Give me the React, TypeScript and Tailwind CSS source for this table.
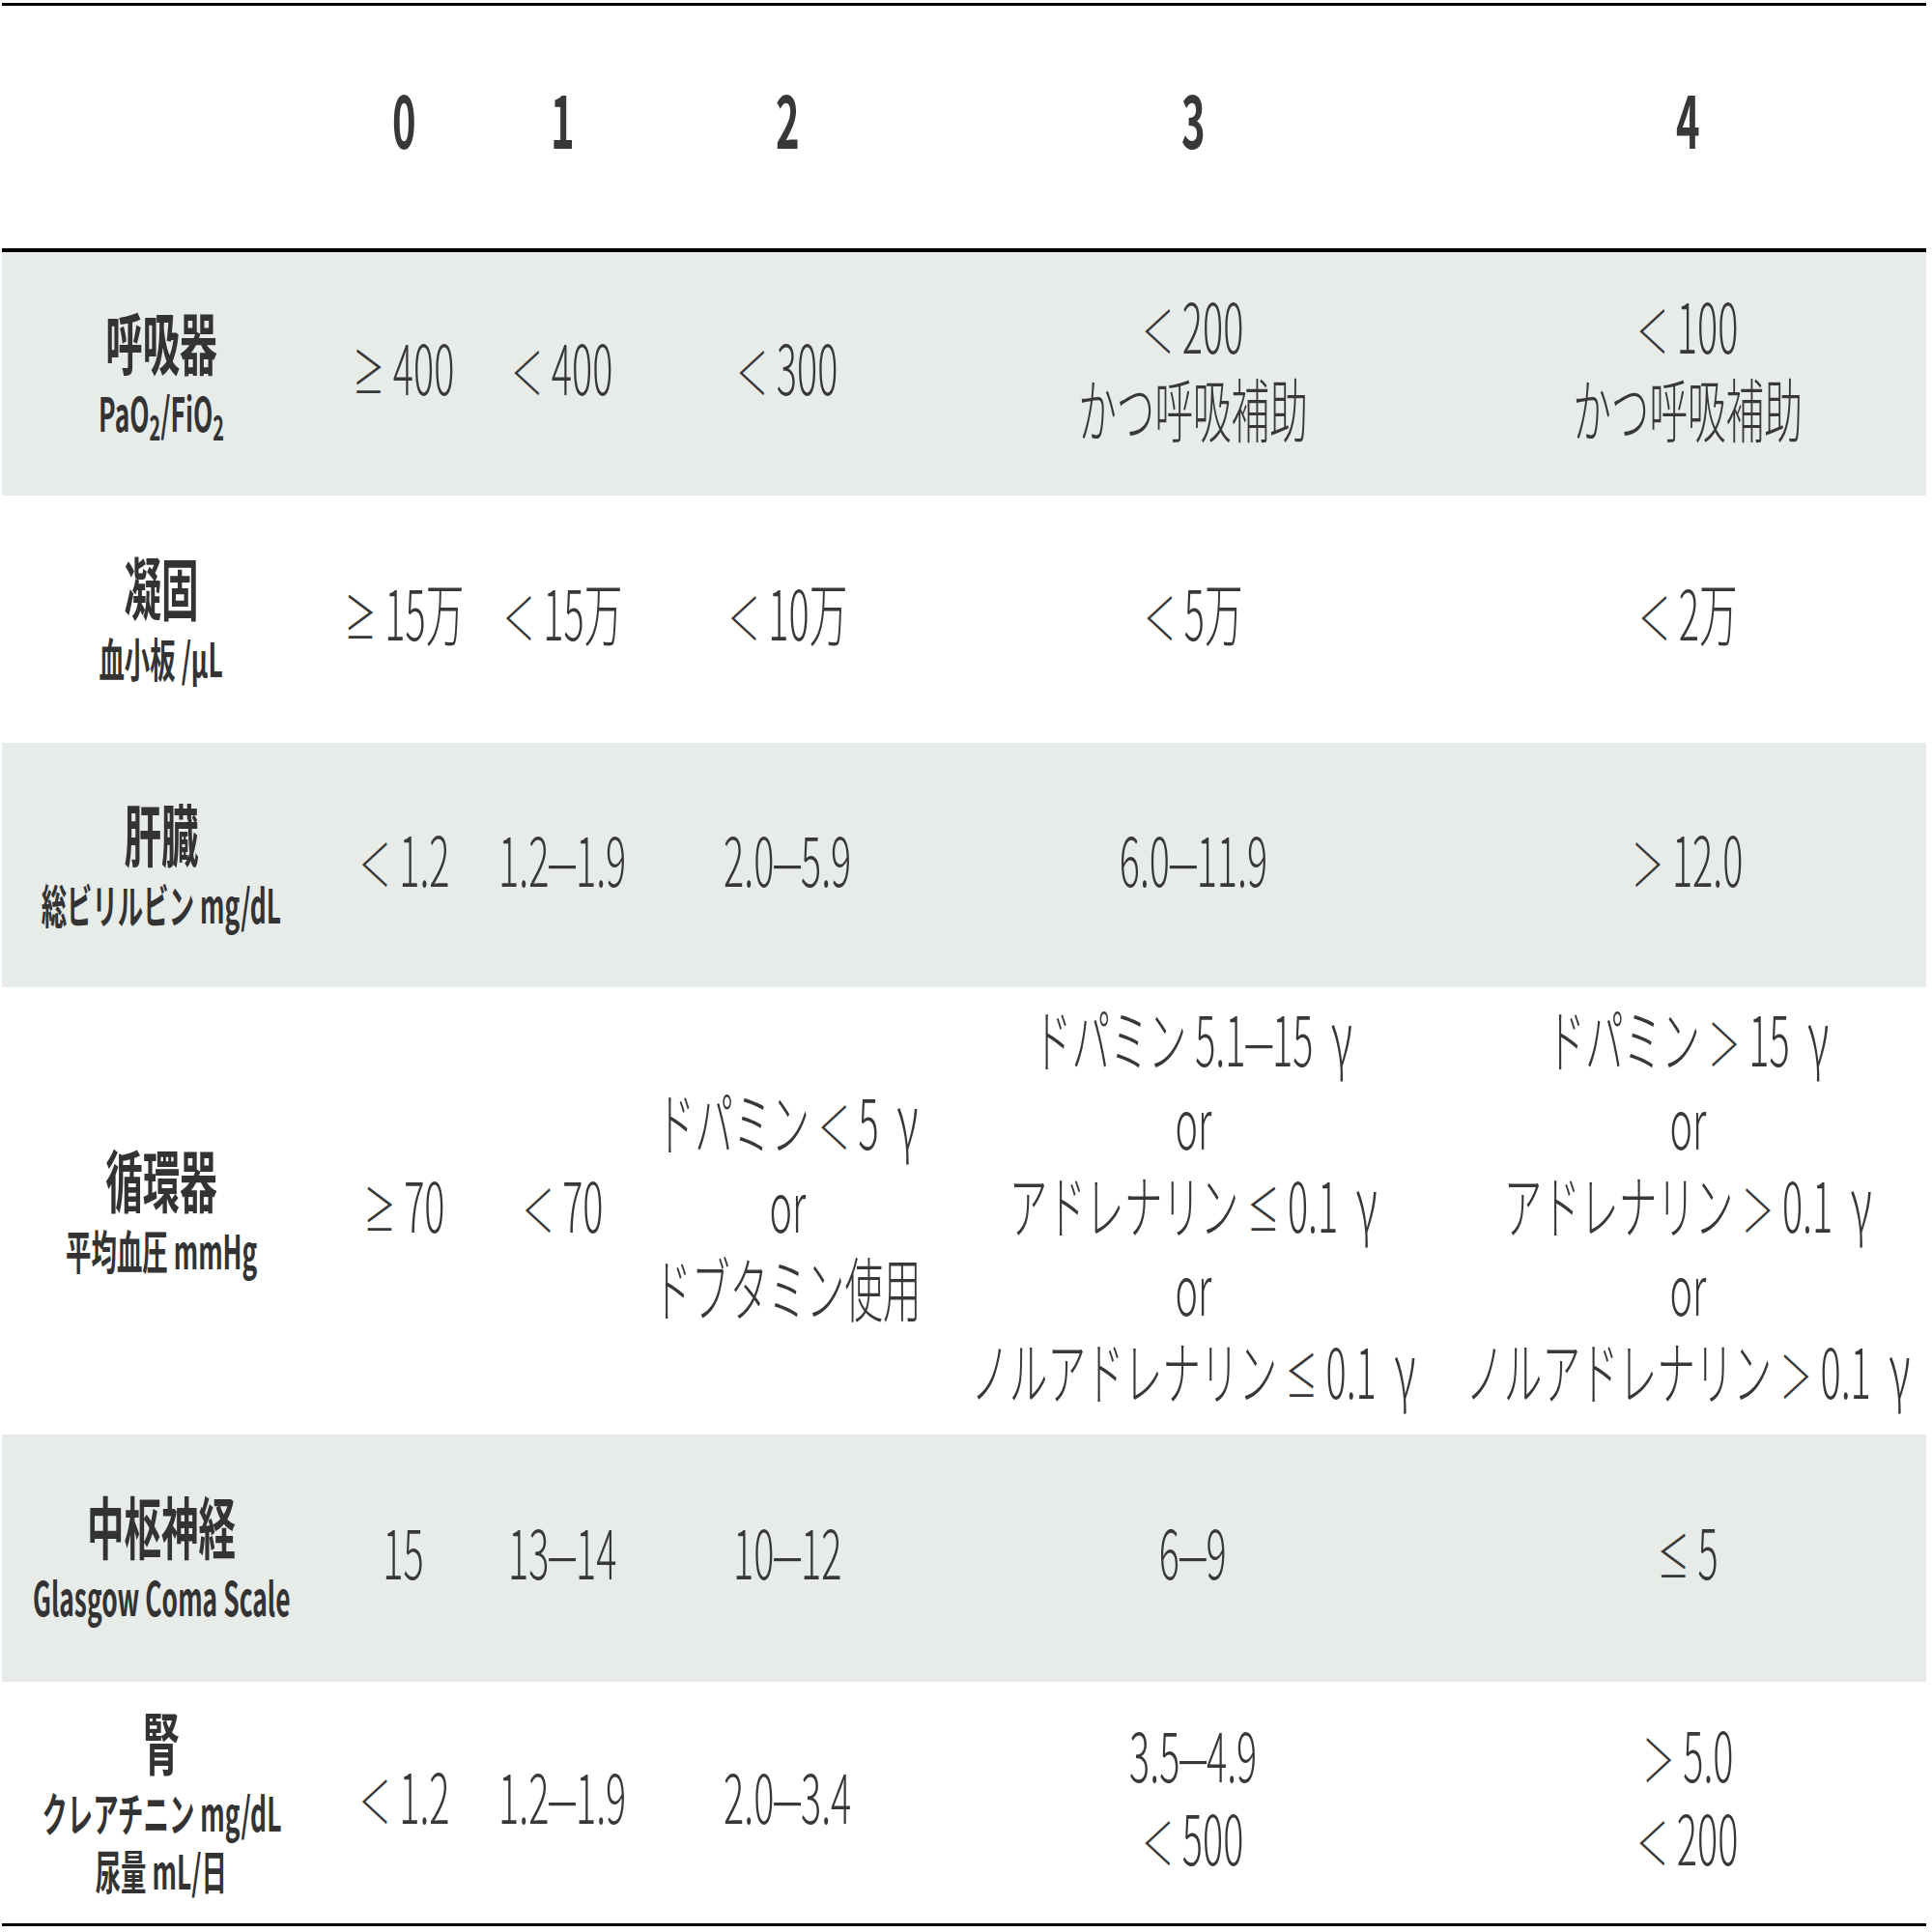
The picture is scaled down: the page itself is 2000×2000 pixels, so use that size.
import React from 'react';

type Row = {
  label: string;
  sub: React.ReactNode[];
  vals: string[][];
  shaded: boolean;
  h: string;
};

const rows: Row[] = [
  {
    label: '呼吸器',
    sub: [
      <>
        PaO<sub>2</sub>/FiO<sub>2</sub>
      </>,
    ],
    vals: [['≥ 400'], ['＜ 400'], ['＜ 300'], ['＜ 200', 'かつ呼吸補助'], ['＜ 100', 'かつ呼吸補助']],
    shaded: true,
    h: 'h-[252px]',
  },
  {
    label: '凝固',
    sub: ['血小板 /μL'],
    vals: [['≥ 15万'], ['＜ 15万'], ['＜ 10万'], ['＜ 5万'], ['＜ 2万']],
    shaded: false,
    h: 'h-[256px]',
  },
  {
    label: '肝臓',
    sub: ['総ビリルビン mg/dL'],
    vals: [['＜ 1.2'], ['1.2–1.9'], ['2.0–5.9'], ['6.0–11.9'], ['＞ 12.0']],
    shaded: true,
    h: 'h-[253px]',
  },
  {
    label: '循環器',
    sub: ['平均血圧 mmHg'],
    vals: [
      ['≥ 70'],
      ['＜ 70'],
      ['ドパミン ＜ 5 γ', 'or', 'ドブタミン使用'],
      ['ドパミン 5.1–15 γ', 'or', 'アドレナリン ≤ 0.1 γ', 'or', 'ノルアドレナリン ≤ 0.1 γ'],
      ['ドパミン ＞ 15 γ', 'or', 'アドレナリン ＞ 0.1 γ', 'or', 'ノルアドレナリン ＞ 0.1 γ'],
    ],
    shaded: false,
    h: 'h-[463px]',
  },
  {
    label: '中枢神経',
    sub: ['Glasgow Coma Scale'],
    vals: [['15'], ['13–14'], ['10–12'], ['6–9'], ['≤ 5']],
    shaded: true,
    h: 'h-[256px]',
  },
  {
    label: '腎',
    sub: ['クレアチニン mg/dL', '尿量 mL/日'],
    vals: [['＜ 1.2'], ['1.2–1.9'], ['2.0–3.4'], ['3.5–4.9', '＜ 500'], ['＞ 5.0', '＜ 200']],
    shaded: false,
    h: 'h-[250px]',
  },
];

const cols = 'grid grid-cols-[330px_172px_156px_310px_530px_494px]';

// the print table uses slimmer comparison signs, a long dash and a tall gamma
function fmt(t: string) {
  return t.split(/([＜＞≥≤γ–])/).map((p, i) => {
    if (p === '＜' || p === '＞' || p === '≥' || p === '≤') {
      return (
        <span key={i} className="text-[60px] leading-[0]">
          {p}
        </span>
      );
    }
    if (p === 'γ') {
      return (
        <span key={i} className="ml-[18px] text-[78px] leading-[0]">
          γ
        </span>
      );
    }
    if (p === '–') {
      return (
        <span key={i} className="inline-block mx-[6px] scale-x-[1.6] leading-[0]">
          –
        </span>
      );
    }
    return <React.Fragment key={i}>{p}</React.Fragment>;
  });
}

function Cell({ children, pad }: { children: React.ReactNode; pad: string }) {
  return <div className={`flex flex-col items-center justify-center ${pad}`}>{children}</div>;
}

export default function App() {
  return (
    <div className="w-[2000px] h-[2000px] bg-white pt-[3px] pl-[2px] text-[#383838] font-['Noto_Sans_CJK_JP',sans-serif]">
      <div className="w-[1992px] border-t-[3px] border-b-[3px] border-black">
        {/* header */}
        <div className={`${cols} h-[255px] border-b-[4px] border-black`}>
          <div />
          {['0', '1', '2', '3', '4'].map((n) => (
            <Cell key={n} pad="pb-[22px]">
              <span className="block scale-x-[0.55] text-[76px] leading-[86px] font-bold">{n}</span>
            </Cell>
          ))}
        </div>

        {rows.map((r) => (
          <div key={r.label} className={`${cols} ${r.h} ${r.shaded ? 'bg-[#e7ece9]' : 'bg-white'}`}>
            <Cell pad="pb-[8px]">
              <span className="block whitespace-nowrap scale-x-[0.55] text-[70px] leading-[86px] font-bold text-[#333]">
                {r.label}
              </span>
              {r.sub.map((s, i) => (
                <span
                  key={i}
                  className="block whitespace-nowrap scale-x-[0.55] text-[48px] leading-[60px] font-bold text-[#333]"
                >
                  {s}
                </span>
              ))}
            </Cell>
            {r.vals.map((lines, ci) => (
              <Cell key={ci} pad="pb-[18px]">
                {lines.map((t, li) => (
                  <span
                    key={li}
                    className="block whitespace-nowrap scale-x-[0.55] text-[72px] leading-[86px] font-light"
                  >
                    {fmt(t)}
                  </span>
                ))}
              </Cell>
            ))}
          </div>
        ))}
      </div>
    </div>
  );
}
